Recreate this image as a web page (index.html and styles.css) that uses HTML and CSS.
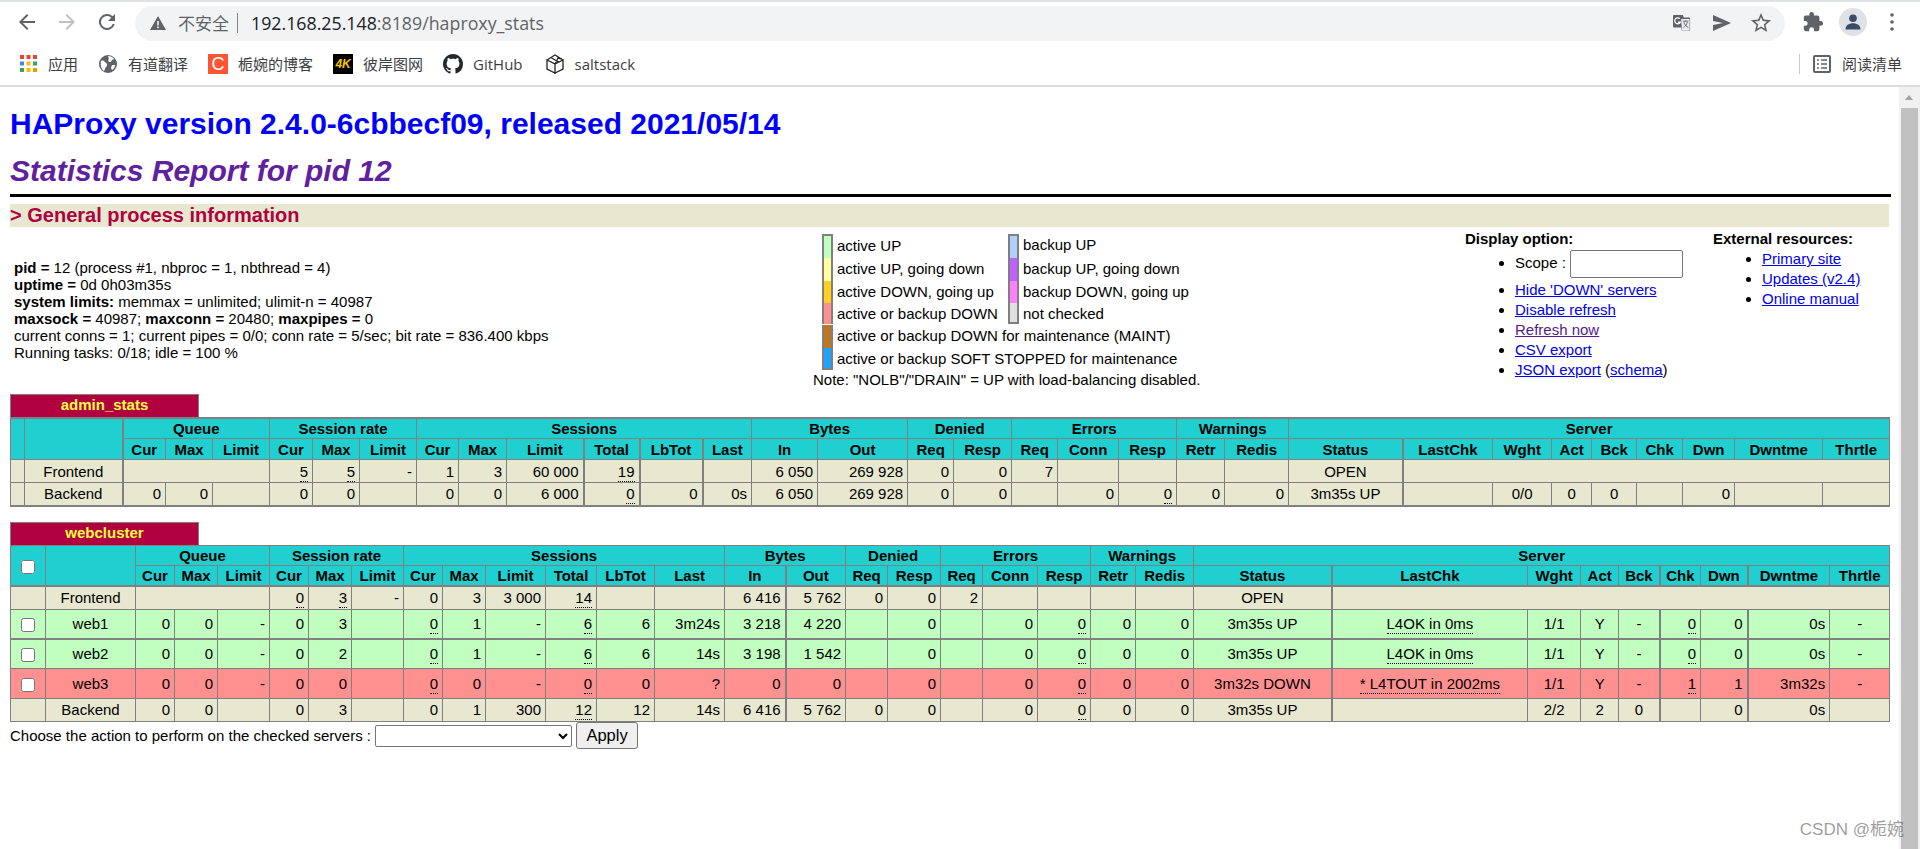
FILE: index.html
```html
<!DOCTYPE html>
<html lang="zh">
<head>
<meta charset="utf-8">
<title>Statistics Report for HAProxy</title>
<link rel="stylesheet" href="styles.css">
</head>
<body>
<div class="browser">
  <header class="toolbar">
    <button class="nav"><svg viewBox="0 0 24 24" width="24" height="24"><path d="M20 11H7.8l5.6-5.6L12 4l-8 8 8 8 1.4-1.4L7.8 13H20z" fill="#5f6368"/></svg></button>
    <button class="nav"><svg viewBox="0 0 24 24" width="24" height="24"><path d="M4 11h12.2l-5.6-5.6L12 4l8 8-8 8-1.4-1.4 5.6-5.6H4z" fill="#bdc1c6"/></svg></button>
    <button class="nav"><svg viewBox="0 0 24 24" width="24" height="24"><path d="M17.65 6.35A8 8 0 1 0 19.73 14h-2.08A6 6 0 1 1 12 6c1.66 0 3.14.69 4.22 1.78L13 11h7V4z" fill="#5f6368"/></svg></button>
    <div class="omnibox">
      <svg class="warn" viewBox="0 0 18 18" width="18" height="18"><path d="M9 2 17 16H1z" fill="#5f6368"/><path d="M8.2 7h1.6v4.6H8.2zM8.2 12.6h1.6v1.6H8.2z" fill="#f1f3f4"/></svg>
      <span class="insecure">不安全</span><span class="sep"></span>
      <span class="url"><span class="host">192.168.25.148</span>:8189/haproxy_stats</span>
      <span class="grow"></span>
      <svg class="oi oi-t" viewBox="0 0 20 20" width="18" height="18"><path d="M1 1h10l1 3h6a1 1 0 0 1 1 1v13a1 1 0 0 1-1 1h-8l-1-4H1a1 1 0 0 1-1-1V2a1 1 0 0 1 1-1z" fill="#5f6368"/><path d="M9 5.5h9.5V18.5H10z" fill="#e8eaed"/><path d="M11 8h6M14 8v-1M12 9c1 3 3 5 5 6M16 9c-1 3-2 4-4 6" stroke="#5f6368" stroke-width="1" fill="none"/><path d="M7.6 5.2A3.3 3.3 0 1 0 8.2 9H5.6" stroke="#fff" stroke-width="1.4" fill="none"/></svg>
      <svg class="oi oi-s" viewBox="0 0 18 16" width="18" height="16"><path d="M0 0 18 8 0 16V10l10-2L0 6z" fill="#5f6368"/></svg>
      <svg class="oi oi-b" viewBox="0 0 24 24" width="24" height="24"><path d="M22 9.2l-7.2-.6L12 2 9.2 8.6 2 9.2l5.5 4.7L5.8 21l6.2-3.7 6.2 3.7-1.7-7.1zM12 15.4l-3.8 2.3 1-4.3-3.3-2.9 4.4-.4L12 6.1l1.7 4 4.4.4-3.3 2.9 1 4.3z" fill="#5f6368"/></svg>
    </div>
    <svg class="puzzle" viewBox="0 0 24 24" width="22" height="22"><path d="M20.5 11H19V7a2 2 0 0 0-2-2h-4V3.5a2.5 2.5 0 0 0-5 0V5H4a2 2 0 0 0-2 2v3.8h1.5a2.7 2.7 0 0 1 0 5.4H2V20a2 2 0 0 0 2 2h3.8v-1.5a2.7 2.7 0 0 1 5.4 0V22H17a2 2 0 0 0 2-2v-4h1.5a2.5 2.5 0 0 0 0-5z" fill="#5f6368"/></svg>
    <div class="avatar"><svg viewBox="0 0 24 24" width="20" height="20"><circle cx="12" cy="7.5" r="4.6" fill="#3c4a66"/><path d="M3 21c0-5 4-7.5 9-7.5s9 2.500 9 7.500z" fill="#3c4a66"/></svg></div>
    <svg class="dots" viewBox="0 0 4 18" width="4" height="18"><circle cx="2" cy="2" r="1.800" fill="#5f6368"/><circle cx="2" cy="9" r="1.800" fill="#5f6368"/><circle cx="2" cy="16" r="1.800" fill="#5f6368"/></svg>
  </header>
  <nav class="bookmarks">
    <a class="bm bm-apps"><svg viewBox="0 0 17 17" width="17" height="17"><rect width="4" height="4" fill="#ea4335"/><rect x="6.500" width="4" height="4" fill="#ea4335"/><rect x="13" width="4" height="4" fill="#ea4335"/><rect y="6.500" width="4" height="4" fill="#4285f4"/><rect x="6.500" y="6.500" width="4" height="4" fill="#fbbc05"/><rect x="13" y="6.500" width="4" height="4" fill="#34a853"/><rect y="13" width="4" height="4" fill="#34a853"/><rect x="6.500" y="13" width="4" height="4" fill="#fbbc05"/><rect x="13" y="13" width="4" height="4" fill="#f29900"/></svg>应用</a>
    <a class="bm bm-yd"><svg viewBox="0 0 18 18" width="18" height="18"><circle cx="9" cy="9" r="9" fill="#5f6368"/><path d="M2 6c2-1 3 0 4 1s2 1 2 3-2 2-2 4l-1 2C3 15 1 11 2 6zM9 1c2 0 5 1 6 3l-2 1-1 2-2 0-1-2 1-1zM13 10l3 0c0 2-1 4-3 5l-1-2z" fill="#fff"/></svg>有道翻译</a>
    <a class="bm bm-c"><span class="csdn">C</span>栀婉的博客</a>
    <a class="bm bm-4k"><span class="fourk">4K</span>彼岸图网</a>
    <a class="bm bm-gh"><svg viewBox="0 0 16 16" width="20" height="20"><path fill="#24292e" d="M8 0C3.58 0 0 3.58 0 8c0 3.540 2.290 6.530 5.470 7.590.4.070.55-.170.55-.380 0-.190-.010-.820-.010-1.490-2.010.370-2.530-.490-2.690-.940-.090-.230-.480-.940-.820-1.130-.280-.150-.680-.520-.010-.530.630-.010 1.080.580 1.230.820.720 1.210 1.870.870 2.330.660.070-.520.280-.870.510-1.070-1.780-.200-3.640-.890-3.640-3.950 0-.870.310-1.590.820-2.150-.080-.200-.360-1.020.080-2.120 0 0 .670-.210 2.200.820.640-.180 1.320-.270 2-.270s1.360.090 2 .270c1.530-1.040 2.200-.820 2.200-.820.440 1.100.160 1.920.080 2.120.510.560.820 1.270.820 2.150 0 3.070-1.870 3.750-3.650 3.950.290.250.540.730.540 1.480 0 1.070-.010 1.930-.010 2.200 0 .210.150.460.550.380A8.010 8.010 0 0 0 16 8c0-4.420-3.580-8-8-8z"/></svg>GitHub</a>
    <a class="bm bm-salt"><svg viewBox="0 0 20 20" width="20" height="20" fill="none" stroke="#222" stroke-width="1.300"><path d="M2 6l8 4v9l-8-4zM10 10l8-4v9l-8 4zM2 6l8-5 8 5M6 3.500l8 5M10 10l3-6 4 1"/></svg>saltstack</a>
    <span class="grow"></span>
    <span class="bm-sep"></span>
    <a class="bm bm-read"><svg viewBox="0 0 18 18" width="18" height="18" fill="none" stroke="#5f6368"><rect x="1" y="1" width="16" height="16" rx="1" stroke-width="2"/><path d="M4 5h2M8 5h6M4 9h2M8 9h6M4 13h2M8 13h6" stroke-width="1.500"/></svg>阅读清单</a>
  </nav>
  <div class="viewport">
    <main class="page">
      <h1>HAProxy version 2.4.0-6cbbecf09, released 2021/05/14</h1>
      <h2>Statistics Report for pid 12</h2>
      <hr class="rule">
      <h3>&gt; General process information</h3>
      <section class="general">
        <div class="info">
          <b>pid = </b>12 (process #1, nbproc = 1, nbthread = 4)<br>
          <b>uptime = </b>0d 0h03m35s<br>
          <b>system limits:</b> memmax = unlimited; ulimit-n = 40987<br>
          <b>maxsock = </b>40987; <b>maxconn = </b>20480; <b>maxpipes = </b>0<br>
          current conns = 1; current pipes = 0/0; conn rate = 5/sec; bit rate = 836.400 kbps<br>
          Running tasks: 0/18; idle = 100 %
        </div>
        <div class="legend">
          <div class="lg-grid">
            <div class="sw s-up"></div><div class="lbl l1">active UP</div><div class="sw2 s-bup"></div><div class="lbl">backup UP</div>
            <div class="sw s-ugd"></div><div class="lbl l2">active UP, going down</div><div class="sw2 s-bgd"></div><div class="lbl">backup UP, going down</div>
            <div class="sw s-dgu"></div><div class="lbl l3">active DOWN, going up</div><div class="sw2 s-bgu"></div><div class="lbl">backup DOWN, going up</div>
            <div class="sw s-dn"></div><div class="lbl l4">active or backup DOWN</div><div class="sw2 s-nc"></div><div class="lbl">not checked</div>
            <div class="sw s-mt"></div><div class="lbl wide">active or backup DOWN for maintenance (MAINT)</div>
            <div class="sw s-sf"></div><div class="lbl wide">active or backup SOFT STOPPED for maintenance</div>
          </div>
          <div class="note">Note: "NOLB"/"DRAIN" = UP with load-balancing disabled.</div>
        </div>
        <div class="options">
          <b>Display option:</b>
          <ul>
            <li class="scope">Scope : <input type="text" class="scope-in"></li>
            <li><a href="#a">Hide 'DOWN' servers</a></li>
            <li><a href="#b">Disable refresh</a></li>
            <li><a class="seen" href="#c">Refresh now</a></li>
            <li><a href="#d">CSV export</a></li>
            <li><a href="#e">JSON export</a> (<a href="#f">schema</a>)</li>
          </ul>
        </div>
        <div class="external">
          <b>External resources:</b>
          <ul>
            <li><a href="#g">Primary site</a></li>
            <li><a href="#h">Updates (v2.4)</a></li>
            <li><a href="#i">Online manual</a></li>
          </ul>
        </div>
      </section>

      <div class="pxname pxname-admin">admin_stats</div>
      <table class="tbl tbl-admin">
        <colgroup><col><col><col class="x"><col><col><col><col><col><col><col><col><col class="x"><col class="x"><col class="x"><col><col><col><col><col><col><col><col><col><col><col class="x"><col><col><col><col><col><col><col></colgroup>
        <thead>
          <tr class="titre h1r"><th rowspan="2"></th><th rowspan="2"></th><th colspan="3">Queue</th><th colspan="3">Session rate</th><th colspan="6">Sessions</th><th colspan="2">Bytes</th><th colspan="2">Denied</th><th colspan="3">Errors</th><th colspan="2">Warnings</th><th colspan="9">Server</th></tr>
          <tr class="titre h2r"><th>Cur</th><th>Max</th><th>Limit</th><th>Cur</th><th>Max</th><th>Limit</th><th>Cur</th><th>Max</th><th>Limit</th><th>Total</th><th>LbTot</th><th>Last</th><th>In</th><th>Out</th><th>Req</th><th>Resp</th><th>Req</th><th>Conn</th><th>Resp</th><th>Retr</th><th>Redis</th><th>Status</th><th>LastChk</th><th>Wght</th><th>Act</th><th>Bck</th><th>Chk</th><th>Dwn</th><th>Dwntme</th><th>Thrtle</th></tr>
        </thead>
        <tbody>
          <tr class="plain admin-row"><td></td><td class="c">Frontend</td><td colspan="3"></td><td><u>5</u></td><td><u>5</u></td><td>-</td><td>1</td><td>3</td><td>60 000</td><td><u>19</u></td><td></td><td></td><td>6 050</td><td>269 928</td><td>0</td><td>0</td><td>7</td><td></td><td></td><td></td><td></td><td class="c">OPEN</td><td colspan="8"></td></tr>
          <tr class="plain admin-row"><td></td><td class="c">Backend</td><td>0</td><td>0</td><td></td><td>0</td><td>0</td><td></td><td>0</td><td>0</td><td>6 000</td><td><u>0</u></td><td>0</td><td>0s</td><td>6 050</td><td>269 928</td><td>0</td><td>0</td><td></td><td>0</td><td><u>0</u></td><td>0</td><td>0</td><td class="c">3m35s UP</td><td></td><td class="c">0/0</td><td class="c">0</td><td class="c">0</td><td></td><td>0</td><td></td><td></td></tr>
        </tbody>
      </table>

      <div class="pxname pxname-web">webcluster</div>
      <form class="px-form">
      <table class="tbl tbl-web">
        <colgroup><col><col><col><col><col><col><col><col><col><col><col><col><col><col><col><col class="x"><col><col><col><col><col><col><col><col><col class="x"><col><col><col><col class="x"><col><col class="x"><col></colgroup>
        <thead>
          <tr class="titre h1w"><th rowspan="2" class="c"><input type="checkbox" class="cb"></th><th rowspan="2"></th><th colspan="3">Queue</th><th colspan="3">Session rate</th><th colspan="6">Sessions</th><th colspan="2">Bytes</th><th colspan="2">Denied</th><th colspan="3">Errors</th><th colspan="2">Warnings</th><th colspan="9">Server</th></tr>
          <tr class="titre h2w"><th>Cur</th><th>Max</th><th>Limit</th><th>Cur</th><th>Max</th><th>Limit</th><th>Cur</th><th>Max</th><th>Limit</th><th>Total</th><th>LbTot</th><th>Last</th><th>In</th><th>Out</th><th>Req</th><th>Resp</th><th>Req</th><th>Conn</th><th>Resp</th><th>Retr</th><th>Redis</th><th>Status</th><th>LastChk</th><th>Wght</th><th>Act</th><th>Bck</th><th>Chk</th><th>Dwn</th><th>Dwntme</th><th>Thrtle</th></tr>
        </thead>
        <tbody>
          <tr class="plain fe-row"><td></td><td class="c">Frontend</td><td colspan="3"></td><td><u>0</u></td><td><u>3</u></td><td>-</td><td>0</td><td>3</td><td>3 000</td><td><u>14</u></td><td></td><td></td><td>6 416</td><td>5 762</td><td>0</td><td>0</td><td>2</td><td></td><td></td><td></td><td></td><td class="c">OPEN</td><td colspan="8"></td></tr>
          <tr class="up srv s1"><td class="c"><input type="checkbox" class="cb"></td><td class="c">web1</td><td>0</td><td>0</td><td>-</td><td>0</td><td>3</td><td></td><td><u>0</u></td><td>1</td><td>-</td><td><u>6</u></td><td>6</td><td>3m24s</td><td>3 218</td><td>4 220</td><td></td><td>0</td><td></td><td>0</td><td><u>0</u></td><td>0</td><td>0</td><td class="c">3m35s UP</td><td class="c"><u>L4OK in 0ms</u></td><td class="c">1/1</td><td class="c">Y</td><td class="c">-</td><td><u>0</u></td><td>0</td><td>0s</td><td class="c">-</td></tr>
          <tr class="up srv s2"><td class="c"><input type="checkbox" class="cb"></td><td class="c">web2</td><td>0</td><td>0</td><td>-</td><td>0</td><td>2</td><td></td><td><u>0</u></td><td>1</td><td>-</td><td><u>6</u></td><td>6</td><td>14s</td><td>3 198</td><td>1 542</td><td></td><td>0</td><td></td><td>0</td><td><u>0</u></td><td>0</td><td>0</td><td class="c">3m35s UP</td><td class="c"><u>L4OK in 0ms</u></td><td class="c">1/1</td><td class="c">Y</td><td class="c">-</td><td><u>0</u></td><td>0</td><td>0s</td><td class="c">-</td></tr>
          <tr class="down srv s3"><td class="c"><input type="checkbox" class="cb"></td><td class="c">web3</td><td>0</td><td>0</td><td>-</td><td>0</td><td>0</td><td></td><td><u>0</u></td><td>0</td><td>-</td><td><u>0</u></td><td>0</td><td>?</td><td>0</td><td>0</td><td></td><td>0</td><td></td><td>0</td><td><u>0</u></td><td>0</td><td>0</td><td class="c">3m32s DOWN</td><td class="c"><u>* L4TOUT in 2002ms</u></td><td class="c">1/1</td><td class="c">Y</td><td class="c">-</td><td><u>1</u></td><td>1</td><td>3m32s</td><td class="c">-</td></tr>
          <tr class="plain be-row"><td></td><td class="c">Backend</td><td>0</td><td>0</td><td></td><td>0</td><td>3</td><td></td><td>0</td><td>1</td><td>300</td><td><u>12</u></td><td>12</td><td>14s</td><td>6 416</td><td>5 762</td><td>0</td><td>0</td><td></td><td>0</td><td><u>0</u></td><td>0</td><td>0</td><td class="c">3m35s UP</td><td></td><td class="c">2/2</td><td class="c">2</td><td class="c">0</td><td></td><td>0</td><td>0s</td><td></td></tr>
        </tbody>
      </table>
      <div class="actions">
        <span>Choose the action to perform on the checked servers :</span>
        <select class="act"><option></option></select>
        <button type="button" class="apply">Apply</button>
      </div>
      </form>
    </main>
    <aside class="scrollbar"><div class="up-arrow"></div><div class="thumb"></div></aside>
  </div>
  <div class="watermark">CSDN @栀婉</div>
</div>
</body>
</html>
```
FILE: styles.css
```css
* { box-sizing: border-box; }
html, body { margin: 0; height: 100%; overflow: hidden; }
body { background: #fff; color: #000; font: 15px/17px "Liberation Sans", Arial, sans-serif; }
.browser { position: relative; height: 849px; width: 1920px; display: flex; flex-direction: column; overflow: hidden; }
.grow { flex: 1; }

/* browser chrome */
.toolbar { height: 42px; flex: none; border-top: 2px solid #dee1e6; display: flex; align-items: center; padding: 0 0 0 7px; background: #fff; }
.nav { width: 40px; height: 32px; padding: 0; border: 0; background: none; display: flex; align-items: center; justify-content: center; }
.omnibox { margin: 2px 0 0 8px; width: 1650px; height: 35px; border-radius: 18px; background: #f1f3f4; display: flex; align-items: center; padding-left: 14px; }
.warn { flex: none; }
.insecure { margin-left: 11px; font: 17px/20px "Noto Sans CJK SC", sans-serif; color: #5f6368; }
.sep { width: 1px; height: 20px; background: #80868b; margin: 0 13px 0 8px; }
.url { font: 17.800px/22px "Open Sans", sans-serif; color: #5f6368; }
.host { color: #202124; }
.oi-t { margin-right: 22px; }
.oi-s { margin-right: 18px; }
.oi-b { margin-right: 12px; }
.puzzle { margin-left: 17px; flex: none; }
.avatar { margin-left: 15px; width: 28px; height: 28px; border-radius: 50%; background: #dee1e6; display: flex; align-items: center; justify-content: center; }
.dots { margin-left: 23px; flex: none; }
.bookmarks { height: 45px; flex: none; border-bottom: 2px solid #dadce0; display: flex; align-items: center; padding: 0 18px 0 20px; font: 15px/20px "Noto Sans CJK SC", sans-serif; color: #3c4043; }
.bm { display: flex; align-items: center; gap: 10px; color: #3c4043; }
.bm-apps { gap: 11px; margin-right: 21px; }
.bm-yd { gap: 11px; margin-right: 20px; }
.bm-c { margin-right: 20px; }
.bm-4k { margin-right: 20px; }
.bm-gh { margin-right: 22px; font-family: "Open Sans", sans-serif; }
.bm-salt { font-family: "Open Sans", sans-serif; }
.csdn { width: 20px; height: 20px; background: #fc5531; color: #fff; font: 18px/20px "Liberation Sans", sans-serif; text-align: center; }
.fourk { width: 20px; height: 20px; background: #000; color: #f5c400; font: italic bold 12px/20px "Liberation Sans", sans-serif; text-align: center; }
.bm-sep { width: 1px; height: 20px; background: #c8cacd; margin-right: 13px; }
.bm-read { gap: 11px; }

/* page */
.viewport { flex: 1; min-height: 0; display: flex; }
.page { flex: 1; min-width: 0; padding: 0 0 0 10px; }
.scrollbar { width: 21px; flex: none; background: #f1f1f1; padding: 0 2px 0 2px; }
.up-arrow { height: 21px; margin: 0; position: relative; }
.up-arrow::before { content: ""; position: absolute; left: 4px; top: 8px; border: 4.500px solid transparent; border-top: 0; border-bottom: 5px solid #a3a3a3; }
.thumb { height: 760px; background: #c1c1c1; }

h1 { margin: 20px 0 0; font-size: 30px; line-height: 34px; font-weight: bold; color: #00f; }
h2 { margin: 13px 0 0; font-size: 30px; line-height: 34px; font-weight: bold; font-style: italic; color: #6020a0; }
.rule { margin: 6px 8px 0 0; width: 1881px; height: 3px; background: #000; border: 0; }
h3 { margin: 7px 10px 0 0; width: 1879px; font-size: 20px; line-height: 23px; font-weight: bold; color: #b00040; background: #e8e8d0; }

.general { display: flex; height: 167px; }
.info { width: 803px; padding: 32px 0 0 4px; }
.legend { width: 652px; padding-top: 7px; }
.lg-grid { display: grid; margin-left: 9px; grid-template-columns: 11px 175px 11px 1fr; grid-auto-rows: auto; }
.sw, .sw2 { border: solid #808080; border-width: 0 2px; width: 11px; }
.lbl { padding-left: 4px; line-height: 22px; }
.l1 { line-height: 24px; }
.wide { grid-column: 2 / 5; }
.note { line-height: 20px; }
.s-up { background: #c0ffc0; border-top-width: 2px; height: 24px; }
.s-ugd { background: #ffffa0; height: 23px; }
.s-dgu { background: #ffd020; height: 22px; }
.s-dn { background: #ff9090; height: 21px; }
.s-mt { background: #c07820; height: 23px; }
.s-sf { background: #20a0ff; height: 22px; border-bottom-width: 2px; }
.s-bup { background: #b0d0ff; border-top-width: 2px; height: 24px; }
.s-bgd { background: #c060ff; height: 23px; }
.s-bgu { background: #ff80ff; height: 22px; }
.s-nc { background: #e0e0e0; height: 21px; border-bottom-width: 2px; }
.options { width: 248px; padding-top: 3px; }
.external { width: 170px; padding-top: 3px; }
ul { margin: 0; padding: 0 0 0 50px; list-style: disc; }
.options ul { margin-top: 1px; }
.options li { line-height: 20px; }
.options li.scope { height: 32px; line-height: 30px; }
.external ul { padding-left: 49px; margin-top: 2px; }
.external li { line-height: 20px; }
a { color: #00e; }
a.seen { color: #551a8b; }
.scope-in { width: 113px; height: 28px; padding: 0 2px; border: 1px solid #767676; border-radius: 2px; background: #fff; vertical-align: middle; margin: 0; }

/* stats tables */
.pxname { width: 189px; height: 23px; background: #b00040; color: #ffff40; font-weight: bold; text-align: center; line-height: 20px; border: solid #808080; border-width: 1px 1px 0 1px; }
.pxname-web { margin-top: 15px; }
.tbl { border-collapse: collapse; table-layout: fixed; width: 1879px; }
.tbl th, .tbl td { border: 1px solid #808080; padding: 1px 4px; line-height: 17px; white-space: nowrap; overflow: hidden; }
.tbl td { text-align: right; }
.tbl th { text-align: center; font-weight: bold; }
.tbl td.c, .tbl th.c { text-align: center; }
.tbl col.x { border-left: 2px solid #808080; }
.titre { background: #20d0d0; color: #000; }
.plain { background: #e8e8d0; }
.up { background: #c0ffc0; }
.down { background: #ff9090; }
u { text-decoration: none; border-bottom: 1px dotted #000; padding-bottom: 1px; }

.tbl-admin { border-top: 2px solid #808080; border-bottom: 2px solid #808080; }
.h1r { height: 20px; }
.h2r { height: 21px; }
.admin-row { height: 23px; }
.h1w { height: 20px; }
.h2w { height: 21px; }
.fe-row { height: 23px; border-top: 2px solid #808080; }
.s1 { height: 30px; }
.s2 { height: 29px; border-top: 2px solid #808080; }
.s3 { height: 30px; }
.be-row { height: 23px; }
.cb { width: 14px; height: 14px; margin: 0; vertical-align: middle; }

.tbl-admin col:nth-child(1) { width: 14px; }
.tbl-admin col:nth-child(2) { width: 98px; }
.tbl-admin col:nth-child(3) { width: 43px; }
.tbl-admin col:nth-child(4) { width: 47px; }
.tbl-admin col:nth-child(5) { width: 57px; }
.tbl-admin col:nth-child(6) { width: 43px; }
.tbl-admin col:nth-child(7) { width: 47px; }
.tbl-admin col:nth-child(8) { width: 57px; }
.tbl-admin col:nth-child(9) { width: 42px; }
.tbl-admin col:nth-child(10) { width: 48px; }
.tbl-admin col:nth-child(11) { width: 77px; }
.tbl-admin col:nth-child(12) { width: 56px; }
.tbl-admin col:nth-child(13) { width: 63px; }
.tbl-admin col:nth-child(14) { width: 49px; }
.tbl-admin col:nth-child(15) { width: 66px; }
.tbl-admin col:nth-child(16) { width: 90px; }
.tbl-admin col:nth-child(17) { width: 46px; }
.tbl-admin col:nth-child(18) { width: 58px; }
.tbl-admin col:nth-child(19) { width: 46px; }
.tbl-admin col:nth-child(20) { width: 61px; }
.tbl-admin col:nth-child(21) { width: 58px; }
.tbl-admin col:nth-child(22) { width: 48px; }
.tbl-admin col:nth-child(23) { width: 64px; }
.tbl-admin col:nth-child(24) { width: 114px; }
.tbl-admin col:nth-child(25) { width: 90px; }
.tbl-admin col:nth-child(26) { width: 59px; }
.tbl-admin col:nth-child(27) { width: 40px; }
.tbl-admin col:nth-child(28) { width: 45px; }
.tbl-admin col:nth-child(29) { width: 46px; }
.tbl-admin col:nth-child(30) { width: 52px; }
.tbl-admin col:nth-child(31) { width: 88px; }
.tbl-admin col:nth-child(32) { width: 67px; }

.tbl-web col:nth-child(1) { width: 35px; }
.tbl-web col:nth-child(2) { width: 90px; }
.tbl-web col:nth-child(3) { width: 39px; }
.tbl-web col:nth-child(4) { width: 43px; }
.tbl-web col:nth-child(5) { width: 52px; }
.tbl-web col:nth-child(6) { width: 39px; }
.tbl-web col:nth-child(7) { width: 43px; }
.tbl-web col:nth-child(8) { width: 52px; }
.tbl-web col:nth-child(9) { width: 39px; }
.tbl-web col:nth-child(10) { width: 43px; }
.tbl-web col:nth-child(11) { width: 60px; }
.tbl-web col:nth-child(12) { width: 51px; }
.tbl-web col:nth-child(13) { width: 58px; }
.tbl-web col:nth-child(14) { width: 70px; }
.tbl-web col:nth-child(15) { width: 61px; }
.tbl-web col:nth-child(16) { width: 60px; }
.tbl-web col:nth-child(17) { width: 42px; }
.tbl-web col:nth-child(18) { width: 53px; }
.tbl-web col:nth-child(19) { width: 42px; }
.tbl-web col:nth-child(20) { width: 55px; }
.tbl-web col:nth-child(21) { width: 53px; }
.tbl-web col:nth-child(22) { width: 45px; }
.tbl-web col:nth-child(23) { width: 58px; }
.tbl-web col:nth-child(24) { width: 138px; }
.tbl-web col:nth-child(25) { width: 196px; }
.tbl-web col:nth-child(26) { width: 53px; }
.tbl-web col:nth-child(27) { width: 38px; }
.tbl-web col:nth-child(28) { width: 41px; }
.tbl-web col:nth-child(29) { width: 41px; }
.tbl-web col:nth-child(30) { width: 47px; }
.tbl-web col:nth-child(31) { width: 82px; }
.tbl-web col:nth-child(32) { width: 60px; }

.actions { display: flex; align-items: center; height: 28px; }
.act { margin-left: 4px; width: 197px; height: 22px; font: 15px "Liberation Sans", sans-serif; background: #fff; border: 1px solid #767676; border-radius: 2px; }
.apply { margin-left: 4px; width: 62px; height: 27px; font: 16.500px "Liberation Sans", sans-serif; padding: 0; background: #efefef; border: 1px solid #767676; border-radius: 3px; }

.watermark { position: absolute; right: 16px; bottom: 9px; font: 17px/20px "Liberation Sans", "Noto Sans CJK SC", sans-serif; color: rgba(90, 90, 90, .6); }
```
